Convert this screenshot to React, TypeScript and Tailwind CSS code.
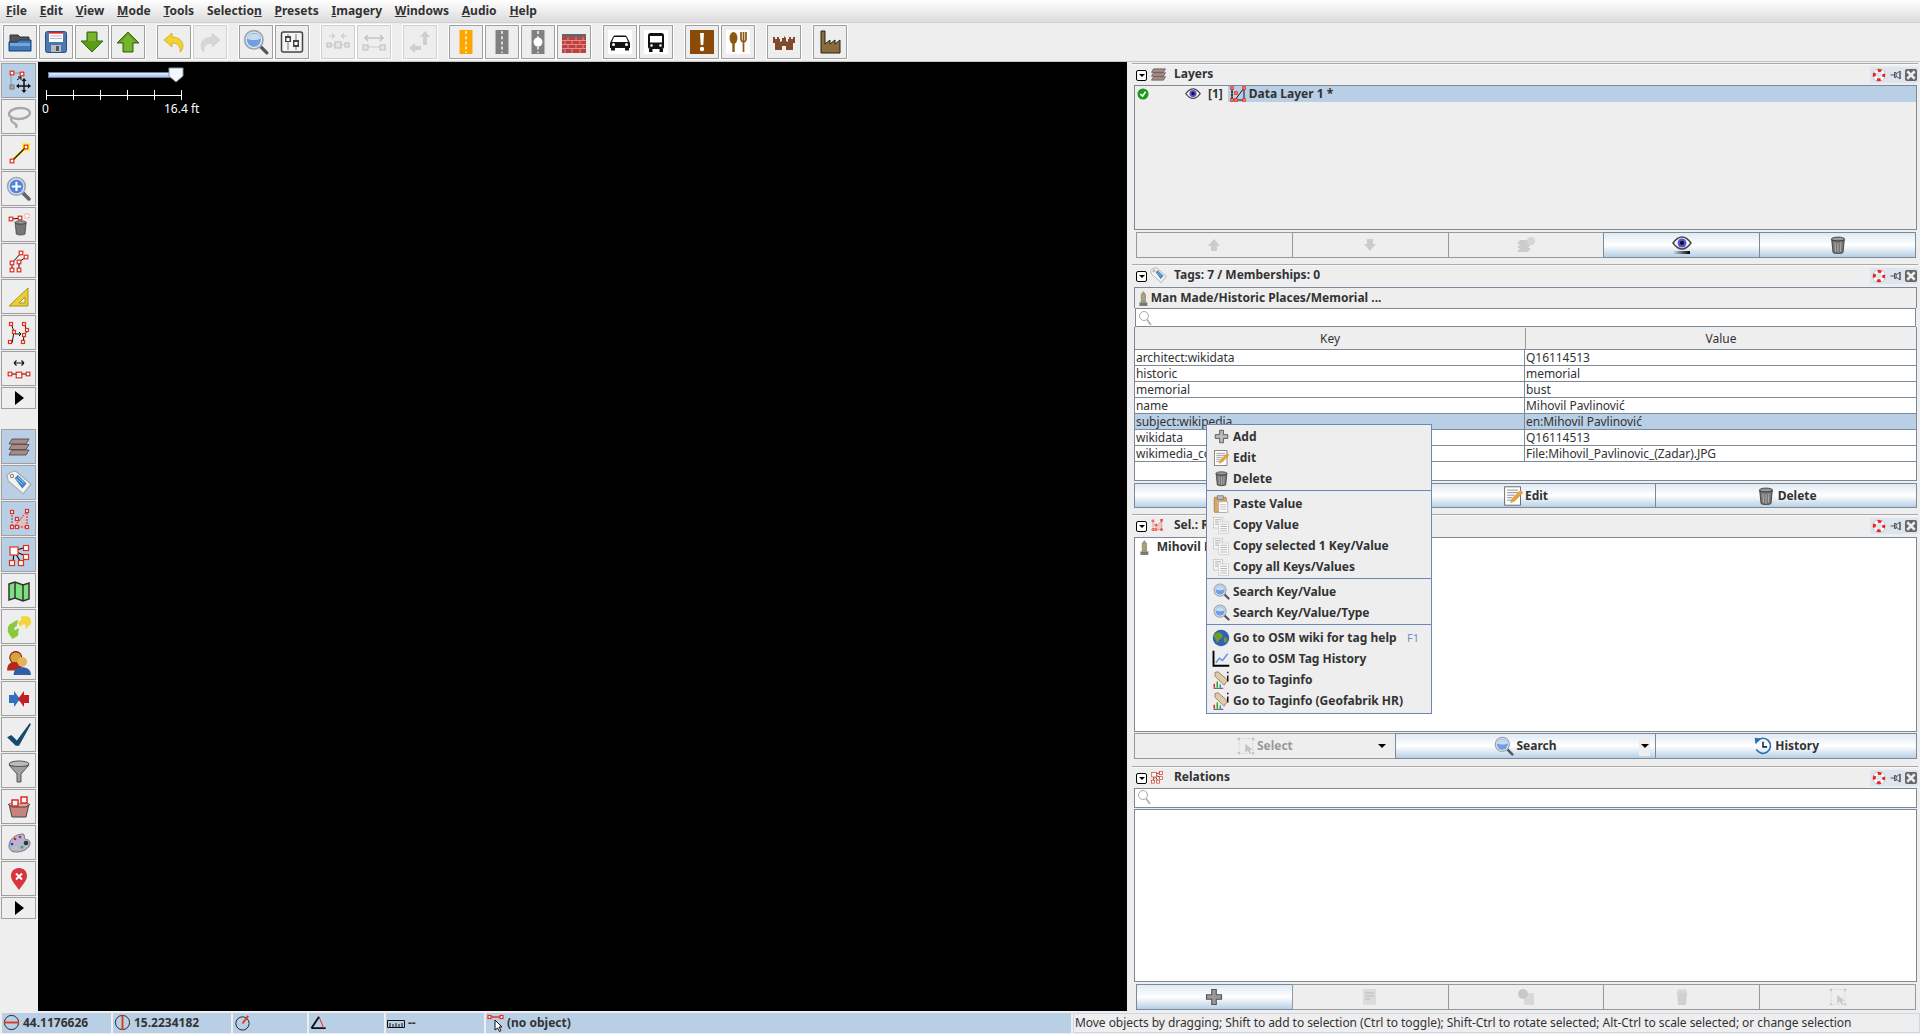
import React from "react";

const V = ({ s = 24, vb = 24, children, o = 1 }: { s?: number; vb?: number; children: React.ReactNode; o?: number }) => (
  <svg width={s} height={s} viewBox={`0 0 ${vb} ${vb}`} opacity={o} className="shrink-0 block">{children}</svg>
);
const N = ({ x, y, r = 1.8, c = "#e0301e" }: { x: number; y: number; r?: number; c?: string }) => (
  <rect x={x - r} y={y - r} width={r * 2} height={r * 2} fill="#fff" stroke={c} strokeWidth="1.2" />
);

const Open = () => <V><path d="M2 5h8l2 2h9v6H2z" fill="#555" stroke="#333" /><path d="M1 21V12h8l2-2h12v11z" fill="#3f7ab8" stroke="#123e73" /><path d="M2 13h20v3H2z" fill="#77a5d6" /></V>;
const Save = () => <V><rect x="1.5" y="1.5" width="21" height="21" rx="2" fill="#4a77b5" stroke="#2e4f80" /><rect x="5" y="2" width="14" height="10" fill="#fff" /><rect x="5" y="2" width="14" height="1.6" fill="#d22" /><path d="M6 6h12M6 8.5h12" stroke="#bbb" /><rect x="7" y="15" width="10" height="7" fill="#bbb" /><rect x="12" y="16" width="3" height="5" fill="#555" /></V>;
const Down = () => <V><path d="M7 2h10v9h6L12 22 1 11h6z" fill="#5d9c1a" stroke="#2f6b08" /><path d="M8 3h8v8H8z" fill="#78b52e" /></V>;
const Up = () => <V><path d="M12 2l11 11h-6v9H7v-9H1z" fill="#5d9c1a" stroke="#2f6b08" /><path d="M12 4l7 8h-3v9H8v-9H5z" fill="#78b52e" /></V>;
const Undo = ({ gray }: { gray?: boolean }) => (
  <svg width="24" height="24" viewBox="0 0 24 24" className="shrink-0 block">
    <path d="M2 10L10 3v4c7 0 11 4 11 9 0 2-1 5-3 6 1-5-2-9-8-9v4z" fill={gray ? "#d6d6d6" : "#f1d32f"} stroke={gray ? "#d0d0d0" : "#c9a20f"} strokeWidth=".7" />
  </svg>
);
const Redo = () => <div className="-scale-x-100"><Undo gray /></div>;
const Mag = ({ s = 24 }: { s?: number }) => (
  <V s={s}>
    <path d="M15 15l7 7" stroke="#555" strokeWidth="3" strokeLinecap="round" />
    <circle cx="10" cy="10" r="8.5" fill="#dfe6ef" stroke="#9aa5b0" strokeWidth="1.5" />
    <circle cx="10" cy="10" r="6.5" fill="#6f9fe0" />
    <path d="M3.7 9a6.5 6.5 0 0 1 12.6 0c-3 1.5-9 1.5-12.6 0z" fill="#c8d9f0" />
  </V>
);
const Prefs = () => <V><rect x="1.5" y="2" width="21" height="20" rx="2" fill="#f5f5f5" stroke="#444" strokeWidth="1.5" /><path d="M8 4v16M16 4v16" stroke="#777" strokeWidth="1" /><rect x="5" y="6" width="6" height="6" fill="#444" /><rect x="6.5" y="8" width="3" height="3" fill="#fff" /><rect x="13" y="10" width="6" height="7" fill="#444" /><rect x="14.5" y="12" width="3" height="3" fill="#fff" /></V>;
const Merge = () => <V><path d="M3 6h5M6 3.500L8.500 6 6 8.500M21 6h-5M18 3.500L15.500 6 18 8.500" fill="none" stroke="#ccc" strokeWidth="1.100" /><path d="M2 15h20" stroke="#ccc" /><rect x="1" y="13" width="4" height="4" fill="#e5e5e5" stroke="#bbb" /><rect x="9" y="12" width="6" height="6" fill="#e5e5e5" stroke="#bbb" /><rect x="19" y="13" width="4" height="4" fill="#e5e5e5" stroke="#bbb" /></V>;
const Unglue = () => <V><path d="M3 8h18M6 5L3 8l3 3M18 5l3 3-3 3" fill="none" stroke="#c4c4c4" strokeWidth="1.6" /><path d="M4 17h16" stroke="#ccc" /><rect x="1" y="15" width="5" height="5" fill="#e5e5e5" stroke="#bbb" /><rect x="18" y="15" width="5" height="5" fill="#e5e5e5" stroke="#bbb" /></V>;
const Turn = () => <V><path d="M17 1l5 6h-3v8h-4V7h-3zM1 18l6-5v3h6v4H7v3z" fill="#cfcfcf" /></V>;
const Road = ({ c, circle, dash = "#fff" }: { c: string; circle?: boolean; dash?: string }) => (
  <svg width="26" height="24" viewBox="0 0 26 24" className="shrink-0 block">
    <rect x="6.5" y="0" width="13" height="24" fill={c} />
    <path d="M13 1v22" stroke={dash} strokeWidth="1.4" strokeDasharray="3 2.2" />
    {circle && <circle cx="13" cy="12" r="4.5" fill="#fff" />}
  </svg>
);
const Wall = () => (
  <V>
    <rect x="0" y="6" width="24" height="17" fill="#bf4040" />
    <rect x="0" y="4" width="24" height="3" fill="#666" />
    <path d="M0 10.5h24M0 14.5h24M0 18.5h24M6 7v3.500M14 7v3.500M21 7v3.500M3 10.500v4M10 10.500v4M18 10.500v4M6 14.500v4M14 14.500v4M21 14.500v4M3 18.500v4.500M10 18.500v4.500M18 18.500v4.500" stroke="#e8a0a0" strokeWidth=".8" />
  </V>
);
const Car = () => (
  <V><rect width="24" height="24" fill="#fff" /><path d="M2 13l3-6c.5-1 1-1.500 2-1.500h10c1 0 1.500.5 2 1.500l3 6v5H2z" fill="#111" /><path d="M6 7h12l2 5H4z" fill="#fff" /><circle cx="5.500" cy="14.500" r="1.500" fill="#fff" /><circle cx="18.500" cy="14.500" r="1.500" fill="#fff" /><rect x="3" y="18" width="4" height="2.500" fill="#111" /><rect x="17" y="18" width="4" height="2.500" fill="#111" /></V>
);
const Bus = () => (
  <V><rect width="24" height="24" fill="#fff" /><rect x="4" y="3" width="16" height="16" rx="2.500" fill="#111" /><rect x="6" y="6" width="12" height="6.500" fill="#fff" /><circle cx="7.500" cy="15.500" r="1.300" fill="#fff" /><circle cx="16.500" cy="15.500" r="1.300" fill="#fff" /><rect x="5" y="19" width="3.500" height="3" fill="#111" /><rect x="15.500" y="19" width="3.500" height="3" fill="#111" /></V>
);
const Warn = () => <V><rect width="24" height="24" fill="#8a4b08" /><path d="M10 3h4l-.7 12h-2.600z" fill="#fff" /><circle cx="12" cy="19" r="2.200" fill="#fff" /></V>;
const Food = () => <V><rect width="24" height="24" fill="#fff" /><ellipse cx="7.500" cy="8" rx="4" ry="6" fill="#8a5a12" /><path d="M7.500 12v10" stroke="#8a5a12" strokeWidth="2.400" /><path d="M15 2v7c0 2 1.500 3 2.500 3s2.500-1 2.500-3V2M17.500 2v20" fill="none" stroke="#8a5a12" strokeWidth="1.700" /></V>;
const Castle = () => <V><path d="M1 7h2v2h2V7h2v2h1v3l2-1V8h2V6h0l2 2v3l2 1V9h1V7h2v2h2V7h2v6h-2v7h-7v-4h-4v4H3v-7H1z" fill="#804a2c" /></V>;
const Factory = () => <V><path d="M3 1h4v13l5-4v4l5-4v4l5-4v13H3z" fill="#8c6d3a" stroke="#222" strokeWidth="1" /></V>;

const Sel = () => (
  <V>
    <path d="M4 4h11M4 5v14" stroke="#888" strokeWidth=".8" /><N x={5} y={4} /><N x={15} y={5} /><rect x="3" y="16" width="4" height="4" fill="#aaa" stroke="#777" />
    <path d="M10 11l4-3M14 8h-3M14 8v3" stroke="#111" fill="none" /><path d="M17 11v12M11 17h12" stroke="#111" strokeWidth="1.500" /><path d="M17 9l2.500 3h-5zM17 24l2.500-3h-5zM9 17l3-2.500v5zM24 17l-3-2.500v5z" fill="#111" />
  </V>
);
const Lasso = () => <V><path d="M13 3c6 0 10 2 10 5s-5 6-11 6c-5 0-10-2-10-5s5-6 11-6z" fill="none" stroke="#a8a8a8" strokeWidth="2.400" /><path d="M5 12c-2 3 0 5 2 6 2 1 3 3 2 5" fill="none" stroke="#a8a8a8" strokeWidth="2.400" /></V>;
const Draw = () => <V><rect x="15" y="2" width="8" height="8" fill="#ffef40" /><path d="M6 19L19 6" stroke="#ffef40" strokeWidth="3" /><path d="M6 19L19 6" stroke="#111" strokeWidth="1.200" /><N x={5} y={20} /><N x={19} y={6} /></V>;
const ZoomIcon = () => <V s={25}><path d="M15 15l7 7" stroke="#666" strokeWidth="3.500" strokeLinecap="round" /><circle cx="10" cy="10" r="8.500" fill="#d8e0ea" stroke="#9aa5b0" strokeWidth="1.500" /><circle cx="10" cy="10" r="6.500" fill="#4f82d8" /><path d="M10 5.500v9M5.500 10h9" stroke="#fff" strokeWidth="2" /></V>;
const Trash = ({ s = 24 }: { s?: number }) => (
  <V s={s}><ellipse cx="12" cy="5" rx="8" ry="2.500" fill="#999" stroke="#333" /><path d="M4.500 6l1.500 15c1 1.500 11 1.500 12 0l1.500-15c-3 1.500-12 1.500-15 0z" fill="#777" stroke="#333" /><path d="M8.500 9l.5 11M12 9.500V21M15.500 9l-.5 11" stroke="#bbb" /></V>
);
const DelTool = () => <V><path d="M5 6l10-1" stroke="#111" /><N x={4} y={6} /><N x={13} y={5} /><rect x="18" y="1" width="4" height="4" fill="#fff" stroke="#f2b3aa" /><g transform="translate(5 6) scale(.72)"><ellipse cx="12" cy="5" rx="8" ry="2.500" fill="#999" stroke="#333" /><path d="M4.500 6l1.500 15c1 1.500 11 1.500 12 0l1.500-15c-3 1.500-12 1.500-15 0z" fill="#777" stroke="#333" /></g></V>;
const Par = () => <V><path d="M5 14L14 4M5 14v7M12 13l7-5M12 13v8" stroke="#111" fill="none" /><N x={14} y={4} /><N x={5} y={14} /><N x={5} y={21} /><N x={12} y={13} /><N x={19} y={8} /><N x={12} y={21} /></V>;
const Ruler = () => <V><path d="M2 21L21 3v18z" fill="#e6cf3a" stroke="#a99515" /><path d="M12 18l6-6v6z" fill="#eee" stroke="#a99515" /></V>;
const Improve = () => <V><path d="M4 2l3 9-2 11M17 2l3 8-3 5-1 7" fill="none" stroke="#111" /><path d="M8 13h6M12 11l2 2-2 2" stroke="#111" fill="none" /><N x={4} y={3} r={1.500} /><N x={7} y={11} r={1.500} /><N x={3} y={21} r={1.500} /><N x={17} y={3} r={1.500} /><N x={20} y={9} r={1.500} /><N x={17} y={14} r={1.500} /><N x={16} y={21} r={1.500} /></V>;
const Align = () => <V><path d="M7 6h10M7 6l2.500-2.500M7 6l2.500 2.500M17 6l-2.500-2.500M17 6l-2.500 2.500" fill="none" stroke="#111" strokeWidth="1.100" /><path d="M3 17h18" stroke="#111" /><N x={3} y={17} /><N x={21} y={17} /><N x={12} y={18} r={2.800} /></V>;
const Tri = ({ s = 16 }: { s?: number }) => <svg width={s} height={s} viewBox="0 0 16 16" className="shrink-0 block"><path d="M4 1l9 7-9 7z" fill="#000" /></svg>;
const Layers = ({ s = 24 }: { s?: number }) => <V s={s}><path d="M5 4h17l-3 5H2z" fill="#a98a85" stroke="#444" strokeWidth=".8" /><path d="M5 9.500h17l-3 5H2z" fill="#a98a85" stroke="#444" strokeWidth=".8" /><path d="M5 15h17l-3 5H2z" fill="#a98a85" stroke="#444" strokeWidth=".8" /></V>;
const Tag = ({ s = 24 }: { s?: number }) => <V s={s}><path d="M1 5l3-3 5-1 14 12-7 9L2 10z" fill="#f2f2f2" stroke="#a5a5a5" /><circle cx="5.500" cy="5.500" r="1.500" fill="#fff" stroke="#888" /><path d="M8 7.500l3-3 8 8-4 4.500z" fill="#3f7fc0" /><path d="M9.500 8l6 5.500M11 6.500l6 5.500" stroke="#cfe0f0" strokeWidth=".7" /></V>;
const DataTri = ({ s = 24 }: { s?: number }) => <V s={s}><path d="M7 20l13-16v16z" fill="#f1b5ad" opacity=".6" /><path d="M5 5v15M5 20h15V4L7 20" fill="none" stroke="#d23" strokeDasharray="2 1" /><N x={5} y={5} r={1.500} /><N x={5} y={20} r={1.500} /><N x={20} y={4} r={1.500} /><N x={20} y={20} r={1.500} /><N x={10} y={20} r={1.500} /><N x={10} y={12} r={1.500} /></V>;
const DataBlack = ({ s = 16 }: { s?: number }) => <V s={s} vb={16}><path d="M2 2v12h12V2L5 14" fill="none" stroke="#111" /><path d="M2 2v12" stroke="#111" strokeDasharray="2 1" /><N x={2} y={2} r={1.200} /><N x={14} y={2} r={1.200} /><N x={2} y={14} r={1.200} /><N x={14} y={14} r={1.200} /><N x={6} y={7} r={1.200} /><N x={6} y={14} r={1.200} /></V>;
const RelI = ({ s = 24 }: { s?: number }) => <V s={s}><path d="M7 8l12-4M7 8l14 6M7 8l-1 12M7 8l8 13" stroke="#111" strokeWidth="1.200" /><N x={7} y={8} r={4} /><N x={19} y={5} r={2.500} /><N x={19} y={14} r={2.500} /><N x={5} y={20} r={2.500} /><N x={14} y={20} r={2.500} /></V>;
const MapI = () => <V><path d="M2 5l6-2 8 3 6-2v16l-6 2-8-3-6 2z" fill="#7fe07f" stroke="#333" strokeWidth="1.500" /><path d="M8 3v16M16 6v16" stroke="#333" strokeWidth="1.500" /></V>;
const Conflict = () => <V s={26}><path d="M11 5L3 10c-2 3-2 7 1 10l2 3 5-3 1-7-4 2c-1-2 0-3 2-4z" fill="#8bc83d" /><path d="M14 2v4c-2 0-3 1-3 3l3 3c0-2 2-3 4-2v4l5-5c1-3-1-6-3-7z" fill="#f0d83a" /></V>;
const Users = () => <V s={26}><circle cx="9" cy="7" r="5.500" fill="#d6a53a" stroke="#8b1a1a" /><path d="M1 19c0-6 3-8 7-8s7 2 7 8z" fill="#b5261e" /><circle cx="15" cy="11" r="4.500" fill="#e8b15e" /><path d="M7 23c0-5 4-7 8-7s8 2 8 7z" fill="#2f5fa8" /></V>;
const Diff = () => <V><path d="M2 8h5V4l6 8-6 8v-4H2z" fill="#2f6fc0" /><path d="M22 8h-5V4l-6 8 6 8v-4h5z" fill="#c02028" /></V>;
const Check = ({ s = 26 }: { s?: number }) => <V s={s}><path d="M1 14l4-2 5 5L22 1l1 1-11 20H9z" fill="#144b6e" /></V>;
const Funnel = () => <V><ellipse cx="12" cy="5" rx="10" ry="3" fill="#bbb" stroke="#555" /><path d="M2 6l8 9v8h4v-8l8-9c-3 2-17 2-20 0z" fill="#a0a0a0" stroke="#555" /></V>;
const Box = () => <V><path d="M2 9l20 0-3 13H5z" fill="#c7837c" stroke="#444" /><path d="M1 9l4 3h14l4-3" fill="#d8a7a0" stroke="#444" /><rect x="5" y="5" width="6" height="6" fill="#fff" stroke="#e02a1c" strokeWidth="1.500" /><rect x="14" y="2" width="6" height="6" fill="#fff" stroke="#e02a1c" strokeWidth="1.500" /></V>;
const Palette = () => <V><path d="M2 15C2 8 9 3 16 3c2 0 1 4 2 5s5 0 5 4c0 6-8 9-14 9-4 0-7-2-7-6z" fill="#b5b5d8" stroke="#777" /><circle cx="8" cy="8" r="1.300" fill="#d22" /><circle cx="13" cy="6" r="1.300" fill="#d22" /><circle cx="19" cy="12" r="2.300" fill="#333" /><circle cx="5" cy="13" r="1.300" fill="#23c" /><circle cx="15" cy="16" r="1.500" fill="#4a4" /><circle cx="9" cy="17" r="1.300" fill="#ec3" /></V>;
const PinX = () => <V><path d="M12 1C6.500 1 4 5 4 9c0 5 5 9 8 14 3-5 8-9 8-14 0-4-2.500-8-8-8z" fill="#d8343e" /><path d="M9 6.500l6 6M15 6.500l-6 6" stroke="#fff" strokeWidth="2" /></V>;

const Eye = ({ s = 16 }: { s?: number }) => <svg width={s} height={s * 0.7} viewBox="0 0 20 14" className="shrink-0 block"><path d="M1 7c3-4 6-6 9-6s6 2 9 6c-3 4-6 6-9 6s-6-2-9-6z" fill="#fff" stroke="#444" strokeWidth="1.500" /><circle cx="10" cy="7" r="4.500" fill="#5552d6" /><circle cx="10" cy="7" r="2" fill="#111" /></svg>;
const Collapse = () => <span className="w-[11px] h-[11px] mt-[3px] border border-black rounded-[2px] bg-white flex items-center justify-center shrink-0"><span className="w-0 h-0 border-l-[3px] border-r-[3px] border-t-[3px] border-l-transparent border-r-transparent border-t-black" /></span>;
const Buoy = () => <V s={14}><circle cx="12" cy="12" r="11.300" fill="#bbb" /><circle cx="12" cy="12" r="10.500" fill="#fff" /><circle cx="12" cy="12" r="8" fill="none" stroke="#e22" strokeWidth="5" strokeDasharray="6.500 6.060" strokeDashoffset="3.250" /><circle cx="12" cy="12" r="5" fill="#dde6ef" /></V>;
const Pin = () => <V s={12}><path d="M1 12h8M9 7h3v10H9zM12 10l8-6v16l-8-6M20 4v16" fill="none" stroke="#555" strokeWidth="2" /></V>;
const Close = () => <span className="w-[12px] h-[12px] bg-[#666] rounded-[2px] flex items-center justify-center shrink-0"><V s={10}><path d="M3 3l18 18M21 3L3 21" stroke="#eee" strokeWidth="6" /></V></span>;
const Memorial = ({ h = 16 }: { h?: number }) => <svg width={h * 0.55} height={h} viewBox="0 0 10 18" className="shrink-0 block"><path d="M2 5l3-4 3 4v9H2z" fill="#9a9a8c" /><rect x="0.500" y="14" width="9" height="4" fill="#777" /><rect x="4" y="6" width="2" height="2" fill="#d2b030" /><rect x="3" y="10" width="4" height="1" fill="#d2b030" /></svg>;
const Plus = ({ s = 18, c = "#999" }: { s?: number; c?: string }) => <V s={s}><path d="M9 2h6v7h7v6h-7v7H9v-7H2V9h7z" fill={c} stroke="#555" strokeWidth="1.500" /></V>;
const EditI = ({ s = 18 }: { s?: number }) => <V s={s}><rect x="2" y="1" width="19" height="22" fill="#fff" stroke="#555" /><path d="M5 5h13M5 8h13M5 11h9M5 14h6M5 17h5" stroke="#777" /><path d="M9 20l2-5 10-10 3 3-10 10z" fill="#e8a62c" stroke="#a86" strokeWidth=".6" /></V>;
const Paste = () => <V s={18}><rect x="3" y="3" width="16" height="20" rx="1" fill="#d8a868" stroke="#9a7035" /><rect x="7" y="1" width="8" height="5" fill="#bbb" stroke="#777" /><rect x="9" y="9" width="12" height="14" fill="#fff" stroke="#aaa" /><path d="M11 13h8M11 16h8M11 19h8" stroke="#aaa" /></V>;
const Copy = () => <V s={18}><rect x="2" y="2" width="12" height="14" fill="#f6f6f6" stroke="#c4c4c4" /><rect x="9" y="8" width="13" height="15" fill="#fff" stroke="#c4c4c4" /><path d="M4 5h8M4 8h4M4 11h4M11 11h9M11 14h9M11 17h9M11 20h9" stroke="#999" /></V>;
const Globe = () => <V s={18}><circle cx="12" cy="12" r="11" fill="#2f62b5" /><path d="M6 5c4-2 7 0 8 3s-2 5-4 6-1 5-3 4-2-5-4-7 0-4 3-6zM17 11c3 0 4 2 3 5s-4 3-4 0 -1-5 1-5z" fill="#6f9a2a" /></V>;
const Hist = () => <V s={18}><path d="M2 1v20h21" fill="none" stroke="#000" strokeWidth="2.500" /><path d="M5 17l5-6 4 3 7-9" fill="none" stroke="#5d97e0" strokeWidth="2" /></V>;
const Taginfo = () => <V s={18}><path d="M4 2l4-1 13 11-5 7L4 7z" fill="#dfc9a8" stroke="#8a6a50" /><path d="M21 1v2M21 6v8" stroke="#111" strokeWidth="2" /><path d="M2 23h13" stroke="#111" /><path d="M3 22v-5" stroke="#d22" strokeWidth="2" /><path d="M7 22v-8" stroke="#2a2" strokeWidth="2" /><path d="M11 22v-4" stroke="#28c" strokeWidth="2" /></V>;
const SelectI = ({ s = 18, o = 0.4 }: { s?: number; o?: number }) => <V s={s} o={o}><rect x="3" y="2" width="18" height="20" fill="none" stroke="#888" strokeDasharray="2 2" /><rect x="1" y="1" width="3" height="3" fill="#888" /><rect x="20" y="1" width="3" height="3" fill="#888" /><rect x="1" y="20" width="3" height="3" fill="#888" /><rect x="20" y="20" width="3" height="3" fill="#888" /><path d="M11 9v12l3-3 3 4 2-1-2-4h4z" fill="#888" /></V>;
const HistI = () => <V s={20}><path d="M5 6a9 9 0 1 1-1 10" fill="none" stroke="#2f6fb5" strokeWidth="2" /><path d="M2 2l8 1-7 7z" fill="#2f6fb5" /><path d="M12 7v6h5" fill="none" stroke="#234" strokeWidth="2" /></V>;
const SearchGlyph = () => <svg width="14" height="16" viewBox="0 0 14 16" className="shrink-0 block"><circle cx="6" cy="6" r="4.500" fill="none" stroke="#aaa" strokeWidth="1" /><path d="M9 9.500l4 5.500" stroke="#aaa" strokeWidth="1.500" /></svg>;

const TB = ({ children, dis }: { children: React.ReactNode; dis?: boolean }) => (
  <div className="w-[36px] h-[36px] shrink-0 flex items-center justify-center bg-[#eeeeee] border border-white">
    <div className={`w-[34px] h-full flex items-center justify-center border ${dis ? "border-[#cfcfcf]" : "border-[#a0a0a0]"} shadow-[1px_1px_0_#fff]`}>{children}</div>
  </div>
);
const Gap = () => <div className="w-[10px] shrink-0" />;

const Tool = ({ children, on, small }: { children: React.ReactNode; on?: boolean; small?: boolean }) => (
  <div className={`w-[35px] ${small ? "h-[22px]" : "h-[35px]"} mb-px shrink-0 flex items-center justify-center border border-[#a0a0a0] ${on ? "bg-[#b8cfe5]" : "bg-[#eeeeee]"}`}>{children}</div>
);

const Title = ({ icon, text, tall, lift }: { icon: React.ReactNode; text: string; tall?: boolean; lift?: boolean }) => (
  <div className={`${tall ? "h-[22px] pb-[3px]" : lift ? "h-[21px] pb-[3px]" : "h-[21px] pb-[2px]"} shrink-0 flex items-center pl-[4px] border-t border-[#f8f8f8]`}>
    <Collapse />
    <div className="w-[18px] ml-[3px] flex items-center">{icon}</div>
    <span className="ml-[6px] font-bold text-[#333] whitespace-nowrap">{text}</span>
    <div className="ml-auto mt-[2px] w-[48px] h-[16px] bg-[#dde6ef] flex items-center justify-between pl-[2px] pr-[1px]"><Buoy /><Pin /><Close /></div>
  </div>
);

const Btn = ({ children, on, cls = "" }: { children?: React.ReactNode; on?: boolean; cls?: string }) => (
  <div className={`flex-1 min-w-0 relative h-full flex items-center justify-center gap-[2px] border font-bold ${on ? "bg-gradient-to-b from-[#dfeaf4] via-white to-[#b8cfe5] border-[#7a8a99] text-[#333]" : "border-[#999] text-[#999] bg-[#eeeeee]"} ${cls}`}>{children}</div>
);
const Arrow = ({ x }: { x: string }) => <span className={`absolute top-1/2 -translate-y-1/2 ${x} w-0 h-0 border-l-[4px] border-r-[4px] border-t-[4px] border-l-transparent border-r-transparent border-t-black`} />;

const rows: [string, string][] = [
  ["architect:wikidata", "Q16114513"],
  ["historic", "memorial"],
  ["memorial", "bust"],
  ["name", "Mihovil Pavlinović"],
  ["subject:wikipedia", "en:Mihovil Pavlinović"],
  ["wikidata", "Q16114513"],
  ["wikimedia_commons", "File:Mihovil_Pavlinovic_(Zadar).JPG"],
];

const MI = ({ icon, t, sc }: { icon: React.ReactNode; t: string; sc?: string }) => (
  <div className="h-[21px] flex items-center pl-[5px] pr-[12px]">
    <div className="w-[18px] flex justify-center shrink-0">{icon}</div>
    <span className="ml-[3px] font-bold text-[#333] whitespace-nowrap">{t}</span>
    {sc && <span className="ml-auto text-[11px] text-[#7a8fb8]">{sc}</span>}
  </div>
);
const MS = () => <div className="h-[4px] border-t border-[#6b86b8] mt-[1px] -mb-px" />;

export default function App() {
  return (
    <div className="w-[1920px] h-[1034px] relative overflow-hidden bg-[#eeeeee] flex flex-col text-[12px] leading-[16px] text-[#333]" style={{ fontFamily: '"Noto Sans", sans-serif' }}>
      <div className="h-[22px] shrink-0 bg-gradient-to-b from-white to-[#dcdcdc] flex items-center pl-[6px] gap-[12.800px] font-bold">
        {["File", "Edit", "View", "Mode", "Tools", "Selection", "Presets", "Imagery", "Windows", "Audio", "Help"].map((m) => (
          <span key={m}>
            {m === "Selection" ? <>Selectio<span className="underline">n</span></> : <><span className="underline">{m[0]}</span>{m.slice(1)}</>}
          </span>
        ))}
      </div>
      <div className="h-[40px] shrink-0 border-y border-t-[#d2d2d2] border-b-[#c6c6c6] bg-[#eeeeee] flex items-center pl-[2px]">
        <TB><Open /></TB><TB><Save /></TB><TB><Down /></TB><TB><Up /></TB><Gap />
        <TB><Undo /></TB><TB dis><Redo /></TB><Gap />
        <TB><Mag s={26} /></TB><TB><Prefs /></TB><Gap />
        <TB dis><Merge /></TB><TB dis><Unglue /></TB><Gap />
        <TB dis><Turn /></TB><Gap />
        <TB><Road c="#ffa500" /></TB><TB><Road c="#808080" /></TB><TB><Road c="#808080" circle /></TB><TB><Wall /></TB><Gap />
        <TB><Car /></TB><TB><Bus /></TB><Gap />
        <TB><Warn /></TB><TB><Food /></TB><Gap />
        <TB><Castle /></TB><Gap />
        <TB><Factory /></TB>
      </div>
      <div className="flex-1 min-h-0 flex">
        <div className="w-[38px] shrink-0 pl-px pt-px flex flex-col">
          <Tool on><Sel /></Tool><Tool><Lasso /></Tool><Tool><Draw /></Tool><Tool><ZoomIcon /></Tool><Tool><DelTool /></Tool><Tool><Par /></Tool><Tool><Ruler /></Tool><Tool><Improve /></Tool><Tool><Align /></Tool>
          <Tool small><Tri /></Tool>
          <div className="h-[19px] shrink-0" />
          <Tool on><Layers /></Tool><Tool on><Tag s={26} /></Tool><Tool on><DataTri /></Tool><Tool on><RelI /></Tool><Tool><MapI /></Tool><Tool><Conflict /></Tool><Tool><Users /></Tool><Tool><Diff /></Tool><Tool><Check /></Tool><Tool><Funnel /></Tool><Tool><Box /></Tool><Tool><Palette /></Tool><Tool><PinX /></Tool>
          <Tool small><Tri /></Tool>
        </div>
        <div className="w-[1089px] shrink-0 bg-black relative">
          <div className="absolute left-[10px] top-[10px] w-[128px] h-[6px] border border-[#5f7fb5] bg-gradient-to-b from-[#eaf0f7] to-[#a6c0df]" />
          <svg className="absolute left-[130px] top-[5px]" width="16" height="16" viewBox="0 0 16 16"><path d="M1 1h14v8l-7 6-7-6z" fill="#f4f7fb" stroke="#8a9ab0" /></svg>
          <div className="absolute left-[8px] top-[28px] w-[136px] h-[10px] flex justify-between items-center">
            <div className="absolute left-0 right-0 top-[5px] h-px bg-white" />
            {[0, 1, 2, 3, 4, 5].map((i) => <div key={i} className="w-px h-[10px] bg-white" />)}
          </div>
          <span className="absolute left-[4px] top-[39px] text-white">0</span>
          <span className="absolute left-[126px] top-[39px] text-white">16.4 ft</span>
        </div>
        <div className="w-[5px] shrink-0" />
        <div className="flex-1 min-w-0 flex flex-col pr-[2px] pt-px pb-px">
          <section className="h-[196px] shrink-0 border-t border-[#aaa] flex flex-col">
            <Title icon={<Layers s={17} />} text="Layers" />
            <div className="h-[145px] shrink-0 border border-[#7a8a99] ml-[2px] mr-[1px]">
              <div className="h-[16px] flex items-center">
                <svg width="12" height="12" viewBox="0 0 14 14" className="ml-[2px] shrink-0"><circle cx="7" cy="7" r="6.500" fill="#1a9a1a" /><path d="M4 7l2.500 2.500L10 4.500" fill="none" stroke="#fff" strokeWidth="2" /></svg>
                <div className="ml-[36px]"><Eye /></div>
                <span className="ml-[7px] font-bold">[1]</span>
                <div className="ml-[5px] flex-1 h-full bg-[#b8cfe5] flex items-center pl-[2px]"><DataBlack /><span className="ml-[3px] font-bold">Data Layer 1 *</span></div>
              </div>
            </div>
            <div className="h-[26px] mt-[2px] ml-[4px] mr-[2px] flex shrink-0">
              <Btn><svg width="16" height="16" viewBox="0 0 16 16"><path d="M8 2l6 7h-3v5H5V9H2z" fill="#ccc" /></svg></Btn>
              <Btn cls="-ml-px"><svg width="16" height="16" viewBox="0 0 16 16"><path d="M5 2h6v5h3l-6 7-6-7h3z" fill="#ccc" /></svg></Btn>
              <Btn cls="-ml-px"><svg width="20" height="18" viewBox="0 0 20 18"><path d="M4 4h11l-3 4H1zM4 8h11l-3 4H1zM4 12h11l-3 4H1z" fill="#ccc" /><circle cx="15" cy="5" r="4" fill="#d6d6d6" /></svg></Btn>
              <Btn on cls="-ml-px flex-col !gap-0"><Eye s={20} /><span className="w-[17px] h-[3px] bg-gradient-to-r from-transparent to-black mt-[1px]" /></Btn>
              <Btn on cls="-ml-px"><Trash s={20} /></Btn>
            </div>
          </section>
          <div className="h-[5px] shrink-0" />
          <section className="h-[245px] shrink-0 border-t border-[#aaa] flex flex-col">
            <Title tall icon={<Tag s={17} />} text="Tags: 7 / Memberships: 0" />
            <div className="h-[21px] ml-[2px] mr-[1px] shrink-0 border border-[#7a8a99] border-b-0 flex items-center pl-[4px] gap-[3px] font-bold"><Memorial h={16} />Man Made/Historic Places/Memorial ...</div>
            <div className="h-[19px] mr-[2px] ml-[3px] shrink-0 border border-[#7a8a99] bg-white flex items-center pl-[2px]"><SearchGlyph /></div>
            <div className="h-[22px] ml-[2px] mr-[1px] pt-[1px] shrink-0 flex border-x border-[#7a8a99]">
              <div className="w-[391px] border-r border-[#999] flex items-center justify-center">Key</div>
              <div className="flex-1 flex items-center justify-center">Value</div>
            </div>
            <div className="h-[132px] ml-[2px] mr-[1px] shrink-0 bg-white border border-[#7a8a99] tracking-[-0.05px]">
              {rows.map(([k, v]) => (
                <div key={k} className={`h-[16px] flex border-b border-[#7a8a99] ${k === "subject:wikipedia" ? "bg-[#b8cfe5]" : ""}`}>
                  <div className="w-[390px] pl-[1px] border-r border-[#7a8a99] leading-[15px] whitespace-nowrap">{k}</div>
                  <div className="flex-1 pl-[1px] leading-[15px]">{v}</div>
                </div>
              ))}
            </div>
            <div className="h-[25px] mt-[2px] mr-[1px] ml-[2px] flex shrink-0">
              <Btn on />
              <Btn on cls="-ml-px"><EditI s={20} />Edit</Btn>
              <Btn on cls="-ml-px"><Trash s={20} />Delete</Btn>
            </div>
          </section>
          <div className="h-[5px] shrink-0" />
          <section className="h-[247px] shrink-0 border-t border-[#aaa] flex flex-col">
            <Title tall icon={<DataTri s={14} />} text="Sel.: Rel.: 0 / Ways: 0 / Nodes: 1" />
            <div className="h-[195px] ml-[2px] mr-[1px] shrink-0 bg-white border border-[#7a8a99] flex items-start pt-[1px] pl-[5px]">
              <div className="flex items-center h-[16px] gap-[8px] font-bold"><Memorial h={16} />Mihovil Pavlinović</div>
            </div>
            <div className="h-[26px] mt-[1px] mr-[1px] ml-[2px] flex shrink-0">
              <Btn><SelectI />Select<Arrow x="right-[9px]" /></Btn>
              <Btn on cls="-ml-px"><Mag s={20} />Search<span className="absolute right-[5px] top-[4px] w-[11px] h-[18px] bg-[#eeeeee]" /><Arrow x="right-[6px]" /></Btn>
              <Btn on cls="-ml-px"><HistI />History</Btn>
            </div>
          </section>
          <div className="h-[5px] shrink-0" />
          <section className="flex-1 min-h-0 border-t border-[#aaa] flex flex-col">
            <Title lift icon={<RelI s={14} />} text="Relations" />
            <div className="h-[20px] ml-[2px] mr-[1px] pb-[2px] shrink-0 bg-white border border-[#7a8a99] flex items-center pl-[2px]"><SearchGlyph /></div>
            <div className="flex-1 min-h-0 ml-[2px] mr-[1px] mt-[1px] bg-white border border-[#7a8a99]" />
            <div className="h-[26px] mt-[2px] ml-[4px] mr-[2px] flex shrink-0">
              <Btn on><Plus s={18} /></Btn>
              <Btn cls="-ml-px"><svg width="16" height="18" viewBox="0 0 16 18"><rect x="1" y="1" width="13" height="16" fill="#dcdcdc" /><path d="M3 5h9M3 8h9M3 11h5" stroke="#bbb" /></svg></Btn>
              <Btn cls="-ml-px"><svg width="18" height="18" viewBox="0 0 18 18"><rect x="7" y="5" width="10" height="12" fill="#d8d8d8" /><circle cx="6" cy="6" r="5" fill="#c8c8c8" /></svg></Btn>
              <Btn cls="-ml-px"><svg width="14" height="18" viewBox="0 0 14 18"><path d="M2 4h10l-1 13H3z" fill="#d0d0d0" /><ellipse cx="7" cy="3" rx="5" ry="2" fill="#d8d8d8" /></svg></Btn>
              <Btn cls="-ml-px"><SelectI o={0.35} /></Btn>
            </div>
          </section>
        </div>
      </div>
      <div className="h-[23px] shrink-0 flex items-center pl-[2px] gap-[2px] font-bold">
        <div className="w-[109px] h-[20px] bg-[#b8cfe5] flex items-center gap-[3px] pl-[1px]"><svg width="17" height="17" viewBox="0 0 18 18"><circle cx="9" cy="9" r="7.500" fill="none" stroke="#222" /><path d="M1 9h16" stroke="#e03a1a" strokeWidth="2" /></svg>44.1176626</div>
        <div className="w-[118px] h-[20px] bg-[#b8cfe5] flex items-center gap-[3px] pl-[1px]"><svg width="17" height="17" viewBox="0 0 18 18"><circle cx="9" cy="9" r="7.500" fill="none" stroke="#222" /><path d="M9 1v16" stroke="#e03a1a" strokeWidth="2" /></svg>15.2234182</div>
        <div className="w-[74px] h-[20px] bg-[#b8cfe5] flex items-center pl-[1px]"><svg width="17" height="17" viewBox="0 0 18 18"><circle cx="9" cy="10" r="7" fill="none" stroke="#222" /><path d="M9 10l6-8" stroke="#e03a1a" strokeWidth="2" /></svg></div>
        <div className="w-[75px] h-[20px] bg-[#b8cfe5] flex items-center pl-[1px]"><svg width="18" height="17" viewBox="0 0 18 18"><path d="M1 15h15M1 15L9 3" stroke="#111" strokeWidth="2" /><path d="M9 3l5 12" stroke="#d22" /></svg></div>
        <div className="w-[98px] h-[20px] bg-[#b8cfe5] flex items-center gap-[3px] pl-[1px]"><svg width="18" height="10" viewBox="0 0 18 10"><path d="M.5 2.500h17v7H.5zM3 5v4M6 6v3M9 5v4M12 6v3M15 5v4" fill="none" stroke="#111" /></svg>--</div>
        <div className="w-[585px] h-[20px] bg-[#b8cfe5] flex items-center pl-[1px] gap-[2px]"><svg width="18" height="18" viewBox="0 0 18 18"><path d="M3 3h12" stroke="#e03a1a" strokeWidth="1.500" /><N x={2.500} y={3} r={1.500} /><N x={14.500} y={3} r={1.500} /><path d="M8 6v10l2.500-2 2 3.500 1.500-1-2-3.500h3z" fill="#fff" stroke="#111" /></svg>(no object)</div>
        <div className="flex-1 min-w-0 h-[20px] border border-[#c9d8e8] font-normal flex items-center pl-[1px] whitespace-nowrap tracking-[-0.05px]">Move objects by dragging; Shift to add to selection (Ctrl to toggle); Shift-Ctrl to rotate selected; Alt-Ctrl to scale selected; or change selection</div>
      </div>
      <div className="absolute left-[1206px] top-[424px] w-[226px] h-[290px] bg-[#eeeeee] border border-[#6b86b8] pt-[1px]">
        <MI icon={<Plus s={15} c="#bbb" />} t="Add" />
        <MI icon={<EditI s={16} />} t="Edit" />
        <MI icon={<Trash s={17} />} t="Delete" />
        <MS />
        <MI icon={<Paste />} t="Paste Value" />
        <MI icon={<Copy />} t="Copy Value" />
        <MI icon={<Copy />} t="Copy selected 1 Key/Value" />
        <MI icon={<Copy />} t="Copy all Keys/Values" />
        <MS />
        <MI icon={<Mag s={17} />} t="Search Key/Value" />
        <MI icon={<Mag s={17} />} t="Search Key/Value/Type" />
        <MS />
        <MI icon={<Globe />} t="Go to OSM wiki for tag help" sc="F1" />
        <MI icon={<Hist />} t="Go to OSM Tag History" />
        <MI icon={<Taginfo />} t="Go to Taginfo" />
        <MI icon={<Taginfo />} t="Go to Taginfo (Geofabrik HR)" />
      </div>
    </div>
  );
}
